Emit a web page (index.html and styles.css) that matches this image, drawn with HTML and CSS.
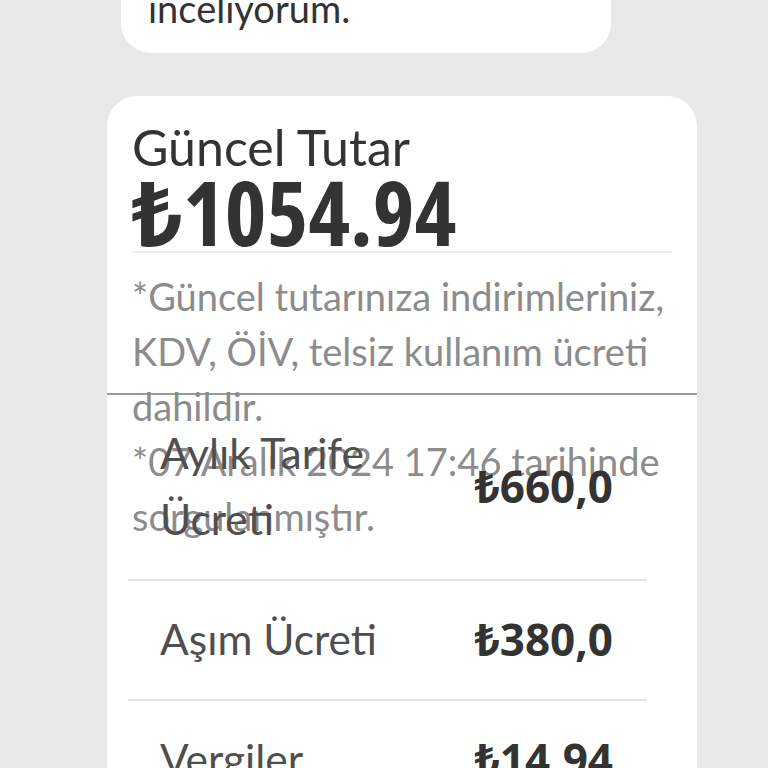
FILE: index.html
```html
<!DOCTYPE html>
<html lang="tr">
<head>
    <meta charset="UTF-8">
    <meta name="viewport" content="width=device-width, initial-scale=1.0">
    <title>Fatura Özeti</title>
    <link rel="stylesheet" href="styles.css">
</head>
<body>
<div class="thread">
    <div class="bubble">
        Son faturamı<br>inceliyorum.
    </div>

    <div class="bill-card">
        <div class="bill-head">
            <div class="bill-title">Güncel Tutar</div>
            <div class="bill-amount">₺1054.94</div>
            <div class="bill-note">
                <p>*Güncel tutarınıza indirimleriniz, KDV, ÖİV, telsiz kullanım ücreti dahildir.</p>
                <p>*07 Aralık 2024 17:46 tarihinde sorgulanmıştır.</p>
            </div>
        </div>

        <div class="bill-items">
            <div class="bill-row">
                <span class="row-label">Aylık Tarife Ücreti</span>
                <span class="row-value">₺660,0</span>
            </div>
            <div class="bill-row">
                <span class="row-label">Aşım Ücreti</span>
                <span class="row-value">₺380,0</span>
            </div>
            <div class="bill-row">
                <span class="row-label">Vergiler</span>
                <span class="row-value">₺14,94</span>
            </div>
        </div>
    </div>
</div>
</body>
</html>
```
FILE: styles.css
```css
body {
    margin: 0;
    background-color: #e8e8e8;
    font-family: "Lato", "Open Sans", sans-serif;
    color: #333;
    overflow: hidden;
}
.thread {
    display: flex;
    flex-direction: column;
    align-items: flex-start;
    gap: 43px;
    margin-top: -83px;
    padding-left: 107px;
}
.bubble {
    margin-left: 14px;
    width: 436px;
    padding: 16px 27px 20px;
    background-color: #fff;
    border-radius: 30px;
    font-size: 38px;
    line-height: 50px;
    color: #333;
}
.bill-card {
    width: 590px;
    background-color: #fff;
    border-radius: 30px;
    padding-top: 25px;
    padding-bottom: 40px;
}
.bill-head {
    padding: 0 25px;
}
.bill-title {
    font-size: 50px;
    line-height: 52px;
    color: #333;
}
.bill-amount {
    font-family: "Open Sans", "Noto Sans", sans-serif;
    font-size: 89px;
    line-height: 78px;
    font-weight: 700;
    font-stretch: 75%;
    color: #333;
    border-bottom: 2px solid #eee;
}
.bill-note {
    margin-top: 16px;
    font-size: 38px;
    line-height: 55px;
    color: #8c8c8c;
}
.bill-note p {
    margin: 0;
}
.bill-items {
    margin-top: -151px;
    border-top: 2px solid #9a9a9a;
}
.bill-row {
    display: flex;
    align-items: center;
    justify-content: space-between;
    margin: 0 50px 0 21px;
    padding: 25px 34px 27px 32px;
    border-bottom: 2px solid #e6e6e6;
}
.row-label {
    max-width: 240px;
    font-size: 42.5px;
    line-height: 66px;
    color: #4f4f4f;
}
.row-value {
    font-family: "Open Sans", "Noto Sans", sans-serif;
    font-size: 44px;
    line-height: 66px;
    font-weight: 700;
    color: #333;
}
```
